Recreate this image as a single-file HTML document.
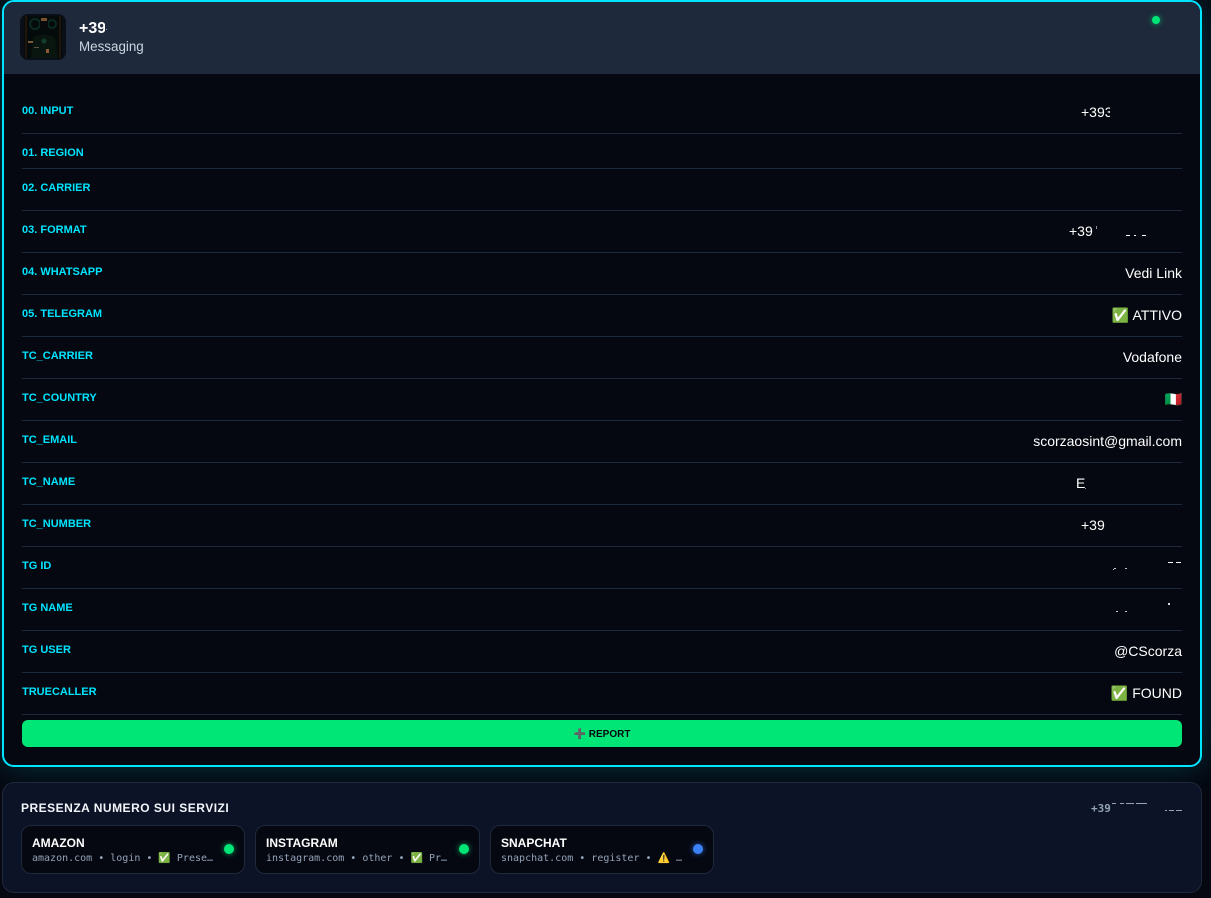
<!DOCTYPE html>
<html lang="it"><head><meta charset="utf-8"><title>Report</title>
<style>
*{box-sizing:border-box}
html,body{margin:0;padding:0;width:1211px;height:898px;overflow:hidden;background:#050811;font-family:"Liberation Sans",sans-serif;color:#fff}
.abs,.l,.v,.s,.p{position:absolute}
.card{position:absolute;left:2px;top:0;width:1200px;height:767px;border:2px solid #00e5ff;border-radius:12px;background:#050811;box-shadow:0 0 30px rgba(0,229,255,.2);overflow:hidden}
.hdr{position:absolute;left:0;top:0;width:1196px;height:72px;background:#1e293b}
.l{left:22px;font-size:11px;line-height:14px;font-weight:700;color:#00e5ff;white-space:nowrap;margin-top:1px}
.v{right:29px;font-size:14px;line-height:18px;color:#fff;white-space:nowrap;text-align:right}
.s{left:22px;width:1160px;height:1px;background:#1e293b}
.p{background:#fff;height:1px}
.panel{position:absolute;left:2px;top:782px;width:1200px;height:111px;background:#0d1326;border:1px solid #1e293b;border-radius:12px}
.svc{position:absolute;top:825px;width:224px;height:49px;background:#050811;border:1px solid #1e293b;border-radius:10px}
.svc b{position:absolute;left:10px;top:10px;font-size:12px;line-height:14px;color:#fff}
.svc span{position:absolute;left:10px;top:26px;font:10px/13px "DejaVu Sans Mono",monospace;color:#94a3b8;white-space:nowrap;overflow:hidden;text-overflow:ellipsis}
.svc i{position:absolute;left:202px;top:18px;width:10px;height:10px;border-radius:50%;background:#00e676;box-shadow:0 0 6px rgba(0,230,118,.7)}
</style></head><body>
<div class="card"><div class="hdr"></div></div>

<svg class="abs" style="left:20px;top:14px" width="46" height="46" viewBox="0 0 46 46">
<rect width="46" height="46" rx="8" fill="#0a0e17"/>
<rect x="4" y="2" width="38" height="42" fill="#050a0a"/>
<rect x="5" y="2" width="2" height="42" fill="#1f150c"/>
<rect x="39" y="2" width="2" height="42" fill="#1f150c"/>
<circle cx="15" cy="10" r="5" fill="none" stroke="#0b2a21" stroke-width="2"/>
<circle cx="32" cy="10" r="4" fill="none" stroke="#0b2a21" stroke-width="2"/>
<path d="M11 44 L13 24 Q24 17 35 24 L38 44Z" fill="#08160f"/>
<rect x="21" y="4" width="6" height="3" fill="#7a5230"/>
<rect x="20" y="7" width="8" height="7" fill="#07090b"/>
<circle cx="24" cy="27" r="2.5" fill="#123f30"/>
<rect x="8" y="27" width="5" height="2" fill="#7a5a38"/>
<rect x="14" y="33" width="5" height="1" fill="#5a5242"/>
<rect x="26" y="35" width="3" height="4" fill="#8a5a36"/>
</svg>
<div class="abs" style="left:79px;top:19px;font-size:16px;line-height:20px;font-weight:700;width:26px;overflow:hidden;white-space:nowrap">+39</div>
<div class="abs" style="left:106px;top:29px;width:1px;height:1px;background:#9aa5b5"></div>
<div class="abs" style="left:79px;top:39px;font-size:13.4px;line-height:16px;color:#cbd5e1">Messaging</div>
<div class="abs" style="left:1152px;top:16px;width:8px;height:8px;border-radius:50%;background:#00e676;box-shadow:0 0 6px rgba(0,230,118,.7)"></div>

<div class="l" style="top:103px">00. INPUT</div>
<div class="abs" style="left:1081px;top:103px;width:29px;overflow:hidden;font-size:14px;line-height:18px;white-space:nowrap">+393</div>
<div class="s" style="top:133px"></div>
<div class="l" style="top:145px">01. REGION</div>
<div class="s" style="top:168px"></div>
<div class="l" style="top:180px">02. CARRIER</div>
<div class="s" style="top:210px"></div>
<div class="l" style="top:222px">03. FORMAT</div>
<div class="abs" style="left:1069px;top:222px;font-size:14px;line-height:18px;white-space:nowrap">+39</div>
<div class="p" style="left:1096px;top:226px;width:1px;height:3px;background:#8891a0"></div>
<div class="p" style="left:1126px;top:235px;width:4px"></div>
<div class="p" style="left:1134px;top:235px;width:2px"></div>
<div class="p" style="left:1142px;top:235px;width:4px"></div>
<div class="s" style="top:252px"></div>
<div class="l" style="top:264px">04. WHATSAPP</div>
<div class="v" style="top:264px">Vedi Link</div>
<div class="s" style="top:294px"></div>
<div class="l" style="top:306px">05. TELEGRAM</div>
<div class="v" style="top:306px">✅ ATTIVO</div>
<div class="s" style="top:336px"></div>
<div class="l" style="top:348px">TC_CARRIER</div>
<div class="v" style="top:348px">Vodafone</div>
<div class="s" style="top:378px"></div>
<div class="l" style="top:390px">TC_COUNTRY</div>
<div class="v" style="top:390px">🇮🇹</div>
<div class="s" style="top:420px"></div>
<div class="l" style="top:432px">TC_EMAIL</div>
<div class="v" style="top:432px">scorzaosint@gmail.com</div>
<div class="s" style="top:462px"></div>
<div class="l" style="top:474px">TC_NAME</div>
<div class="abs" style="left:1076px;top:474px;font-size:14px;line-height:18px">E</div>
<div class="p" style="left:1085px;top:488px;width:1px;background:#8891a0"></div>
<div class="s" style="top:504px"></div>
<div class="l" style="top:516px">TC_NUMBER</div>
<div class="abs" style="left:1081px;top:516px;font-size:14px;line-height:18px">+39</div>
<div class="s" style="top:546px"></div>
<div class="l" style="top:558px">TG ID</div>
<div class="p" style="left:1114px;top:568px;width:2px;background:#c8ccd4"></div>
<div class="p" style="left:1113px;top:569px;width:1px;background:#c8ccd4"></div>
<div class="p" style="left:1125px;top:568px;width:2px;background:#c8ccd4"></div>
<div class="p" style="left:1168px;top:562px;width:5px"></div>
<div class="p" style="left:1176px;top:562px;width:5px"></div>
<div class="s" style="top:588px"></div>
<div class="l" style="top:600px">TG NAME</div>
<div class="p" style="left:1116px;top:611px;width:2px;background:#c8ccd4"></div>
<div class="p" style="left:1125px;top:611px;width:2px;background:#c8ccd4"></div>
<div class="p" style="left:1168px;top:603px;width:2px;height:2px;background:#d8dbe0"></div>
<div class="s" style="top:630px"></div>
<div class="l" style="top:642px">TG USER</div>
<div class="v" style="top:642px">@CScorza</div>
<div class="s" style="top:672px"></div>
<div class="l" style="top:684px">TRUECALLER</div>
<div class="v" style="top:684px">✅ FOUND</div>
<div class="s" style="top:714px"></div>

<div class="abs" style="left:22px;top:720px;width:1160px;height:27px;background:#00e676;border-radius:6px;text-align:center;font-size:10px;line-height:29px;font-weight:700;color:#050811">➕ REPORT</div>

<div class="panel"></div>
<div class="abs" style="left:21px;top:800px;font-size:12px;line-height:16px;font-weight:700;letter-spacing:.5px;color:#f1f5f9">PRESENZA NUMERO SUI SERVIZI</div>
<div class="abs" style="left:1091px;top:802px;font:700 11px/14px 'DejaVu Sans Mono',monospace;color:#94a3b8">+39</div>
<div class="p" style="left:1112px;top:803px;width:4px;background:#94a3b8"></div>
<div class="p" style="left:1120px;top:803px;width:4px;background:#94a3b8"></div>
<div class="p" style="left:1126px;top:803px;width:8px;background:#94a3b8"></div>
<div class="p" style="left:1136px;top:803px;width:11px;background:#94a3b8"></div>
<div class="p" style="left:1165px;top:810px;width:2px;background:#94a3b8"></div>
<div class="p" style="left:1169px;top:810px;width:5px;background:#94a3b8"></div>
<div class="p" style="left:1176px;top:810px;width:6px;background:#94a3b8"></div>

<div class="svc" style="left:21px"><b>AMAZON</b><span style="width:182px">amazon.com • login • ✅ Presente</span><i></i></div>
<div class="svc" style="left:255px;width:225px"><b>INSTAGRAM</b><span style="width:182px">instagram.com • other • ✅ Presente</span><i style="left:203px"></i></div>
<div class="svc" style="left:490px"><b>SNAPCHAT</b><span style="width:182px">snapchat.com • register • ⚠️ Rate limit</span><i style="background:#3b82f6;box-shadow:0 0 6px rgba(59,130,246,.7)"></i></div>
</body></html>
